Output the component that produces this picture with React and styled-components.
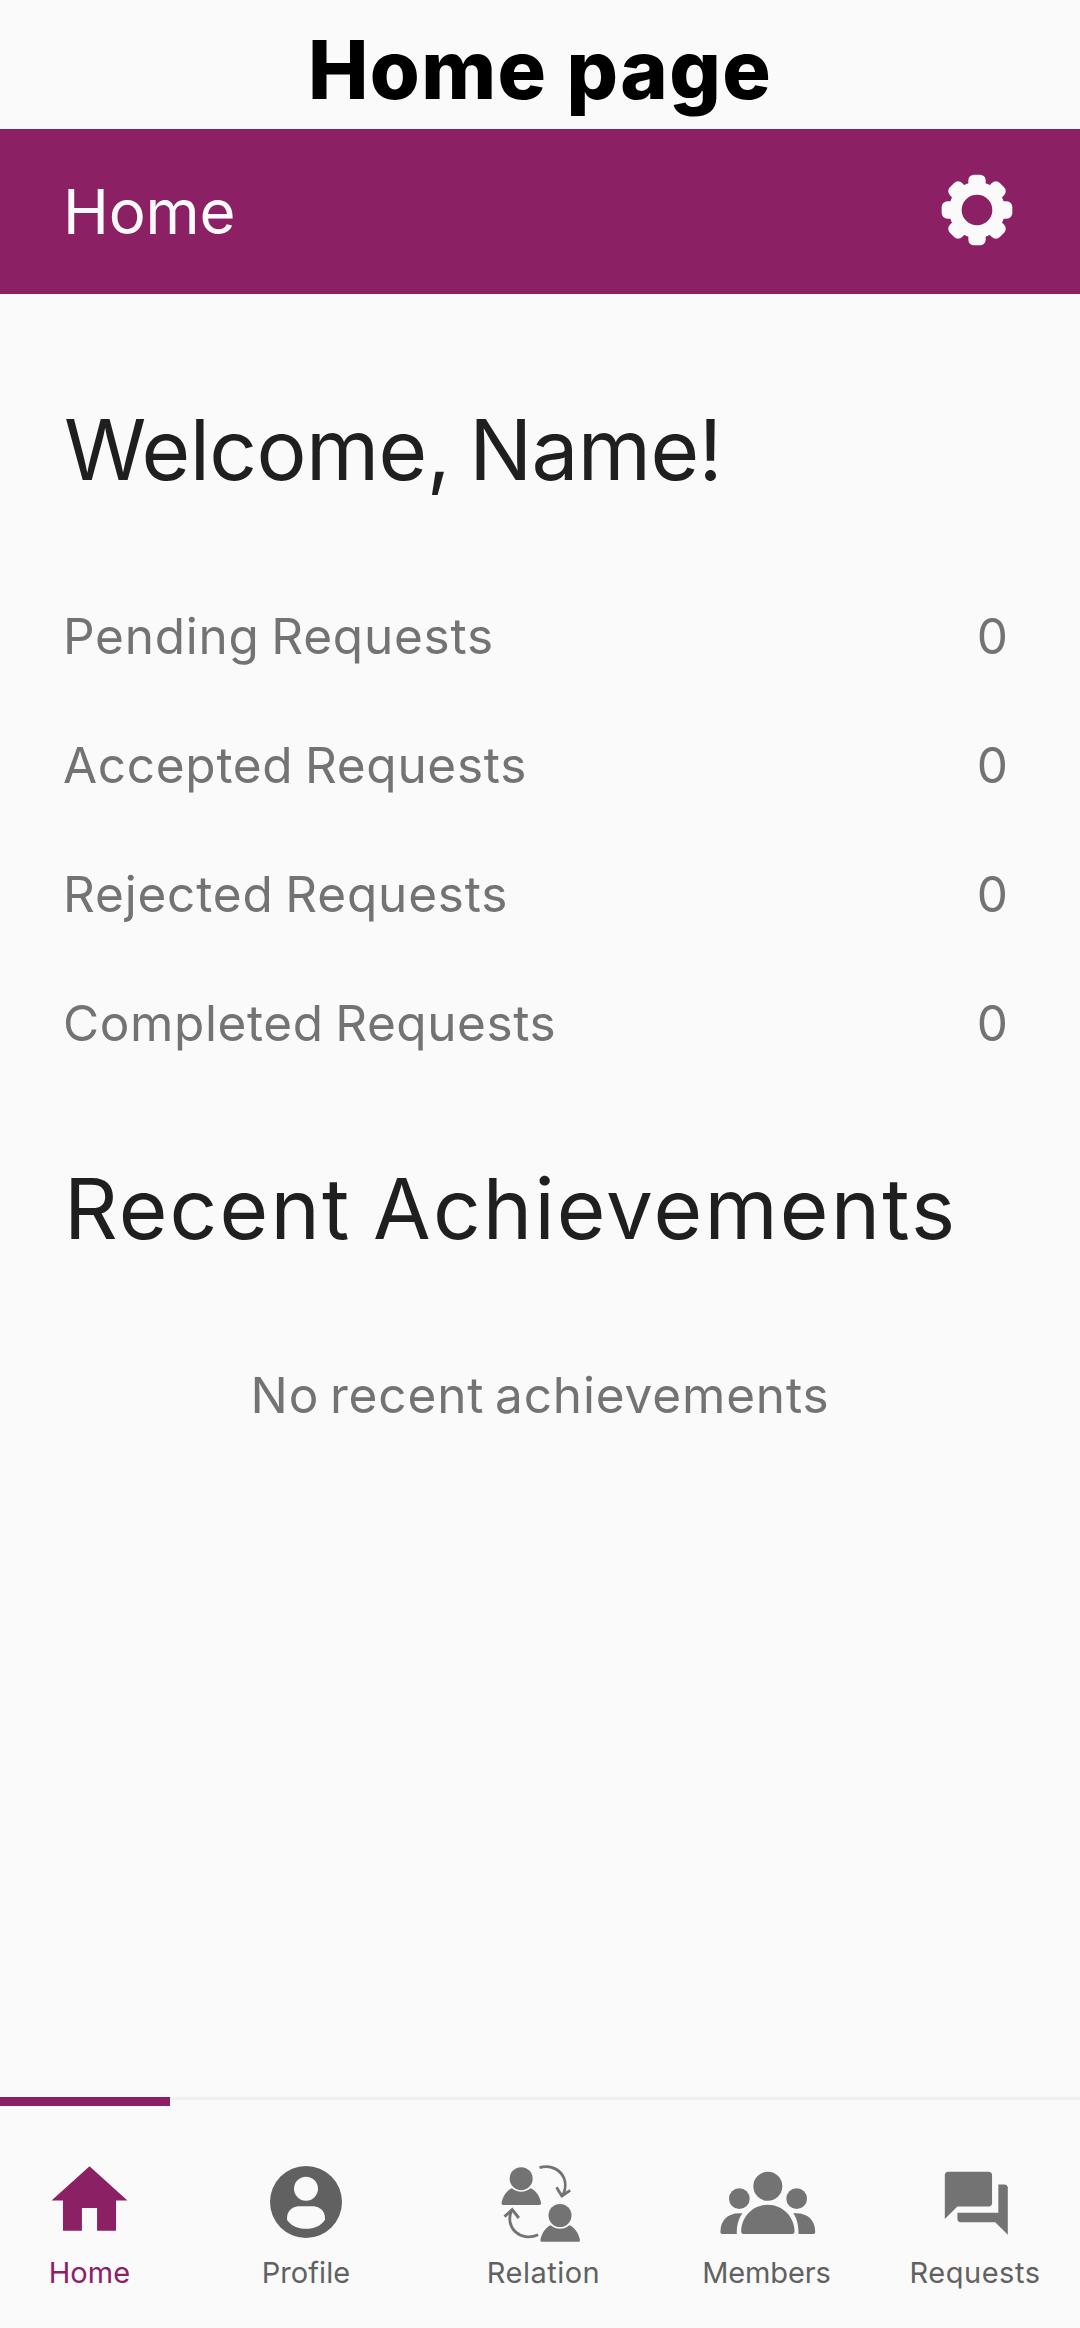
import React from "react";
import styled, { createGlobalStyle } from "styled-components";

const colors = {
  brand: "#8b2164",
  page: "#fafafa",
  ink: "#1f1f1f",
  muted: "#737373",
  nav: "#616161",
  line: "#f0f0f0",
};

const GlobalStyle = createGlobalStyle`
  *, *::before, *::after { box-sizing: border-box; }
  body {
    margin: 0;
    background: ${colors.page};
    font-family: Inter, Roboto, "Liberation Sans", sans-serif;
    font-weight: 430;
  }
`;

const Screen = styled.div`
  display: flex;
  flex-direction: column;
  width: 1080px;
  height: 2328px;
  background: ${colors.page};
  overflow: hidden;
`;

const PageTitle = styled.h1`
  display: flex;
  align-items: center;
  justify-content: center;
  flex: none;
  height: 129px;
  margin: 0;
  padding-top: 10px;
  font-size: 80.8px;
  font-weight: 800;
  line-height: 100px;
  letter-spacing: 1.4px;
  color: #000;
`;

const AppBar = styled.header`
  display: flex;
  align-items: center;
  justify-content: space-between;
  flex: none;
  height: 165px;
  padding: 0 67px 0 63px;
  background: ${colors.brand};
  color: ${colors.page};
`;

const AppBarTitle = styled.div`
  font-size: 61.8px;
  line-height: 80px;
  letter-spacing: -0.2px;
`;

const IconButton = styled.button`
  display: flex;
  padding: 0 0 4px;
  border: 0;
  background: none;
  color: inherit;
`;

const Content = styled.main`
  display: flex;
  flex-direction: column;
  flex: 1;
  padding-top: 106px;
`;

const Heading = styled.h2`
  margin: 0;
  padding-left: 64px;
  font-size: 83.6px;
  font-weight: 430;
  line-height: 100px;
  letter-spacing: ${(p) => p.$track}px;
  word-spacing: -4px;
  white-space: nowrap;
  color: ${colors.ink};
`;

const Stats = styled.dl`
  display: flex;
  flex-direction: column;
  margin: 71px 0 72px;
  padding: 0 72px 0 63px;
`;

const StatRow = styled.div`
  display: flex;
  align-items: center;
  justify-content: space-between;
  height: 129px;
  font-size: 49.5px;
  line-height: 60px;
  color: ${colors.muted};
`;

const StatLabel = styled.dt`
  letter-spacing: ${(p) => p.$track}px;
  word-spacing: -3px;
`;

const StatValue = styled.dd`
  margin: 0;
`;

const EmptyText = styled.p`
  margin: 106px 0 0;
  text-align: center;
  font-size: 49.5px;
  line-height: 60px;
  letter-spacing: 0.85px;
  word-spacing: -4px;
  color: ${colors.muted};
`;

const NavBar = styled.nav`
  position: relative;
  display: grid;
  grid-template-columns: 179px 254px 221px 225px 192px;
  flex: none;
  height: 231px;
  border-top: 3px solid ${colors.line};
`;

const ActiveBar = styled.span`
  position: absolute;
  top: -3px;
  left: 0;
  width: 169.5px;
  height: 9px;
  background: ${colors.brand};
`;

const NavItem = styled.a`
  display: flex;
  flex-direction: column;
  align-items: center;
  padding-top: 52px;
  color: ${(p) => (p.$active ? colors.brand : colors.nav)};
`;

const NavIcon = styled.span`
  display: flex;
  align-items: center;
  justify-content: center;
  height: 100px;
  color: ${(p) => p.$tone};
`;

const NavLabel = styled.span`
  font-size: 29px;
  line-height: 41px;
  letter-spacing: ${(p) => p.$track}px;
`;

const GearIcon = () => (
  <svg width="72" height="72" viewBox="-108 -108 216 216">
    <circle r="65" fill="none" stroke="currentColor" strokeWidth="38" />
    {[0, 45, 90, 135, 180, 225, 270, 315].map((angle) => (
      <rect
        key={angle}
        x="-26"
        y="-106"
        width="52"
        height="50"
        rx="17"
        fill="currentColor"
        transform={`rotate(${angle})`}
      />
    ))}
  </svg>
);

const HomeIcon = () => (
  <svg width="91" height="91" viewBox="0 0.53 24 24" fill="currentColor">
    <path d="M10 20v-6h4v6h5v-8h3L12 3 2 12h3v8z" />
  </svg>
);

const ProfileIcon = () => (
  <svg width="72" height="72" viewBox="0 0 216 216">
    <circle cx="108" cy="108" r="108" fill="currentColor" />
    <circle cx="108" cy="68" r="36" fill={colors.page} />
    <path
      d="M84 120.500H132C152 122 165 138 165 156V161C155 178 132 188.500 108 188.500S61 178 51 161V156C51 138 64 122 84 120.500z"
      fill={colors.page}
    />
  </svg>
);

const RelationIcon = () => (
  <svg width="90" height="90" viewBox="175.5 111 270 270" fill="currentColor">
    {[[0, 0], [116.5, 110.5]].map(([x, y]) => (
      <g key={x} transform={`translate(${x} ${y})`}>
        <circle cx="242" cy="176" r="34.500" />
        <path d="M214 205C230 219 254 219 270 205C288 212 299 232 302 250Q302 255 297 255H188Q183 255 183 250C186 232 197 212 214 205z" />
      </g>
    ))}
    <g fill="none" stroke="currentColor" strokeWidth="8.500">
      <path d="M297 143C348 127 393 173 366 228" />
      <path d="M348 202L364 228L389 211" />
      <path d="M293 344C240 368 190 322 214 270" />
      <path d="M192 290L215 269L235 294" />
    </g>
  </svg>
);

const MembersIcon = () => (
  <svg width="100" height="100" viewBox="109.500 96 300 300" fill="currentColor">
    <circle cx="262" cy="199" r="43.500" />
    <circle cx="176.500" cy="236" r="31" />
    <circle cx="348.500" cy="236" r="31" />
    <path d="M182 334C182 291 217 254 262 254S342 291 342 334Q342 342 335 342H189Q182 342 182 334z" />
    <path d="M186 280C174 296 168 318 169 342H125Q119 342 120 334C120 302 142 276 186 280z" />
    <path d="M338 280C350 296 354 318 354 342H399Q405 342 404 334C404 302 382 276 338 280z" />
  </svg>
);

const RequestsIcon = () => (
  <svg width="75.600" height="75.600" viewBox="-0.48 -0.48 24 24" fill="currentColor">
    <path d="M21 6h-2v9H6v2c0 .55.45 1 1 1h11l4 4V7c0-.55-.45-1-1-1zm-4 6V3c0-.55-.45-1-1-1H3c-.55 0-1 .45-1 1v14l4-4h10c.55 0 1-.45 1-1z" />
  </svg>
);

const stats = [
  { label: "Pending Requests", value: 0, track: 0.76 },
  { label: "Accepted Requests", value: 0, track: 0.7 },
  { label: "Rejected Requests", value: 0, track: 0.82 },
  { label: "Completed Requests", value: 0, track: 0.6 },
];

const tabs = [
  { label: "Home", Icon: HomeIcon, tone: colors.brand, track: 0.1, active: true },
  { label: "Profile", Icon: ProfileIcon, tone: colors.nav, track: 0.05 },
  { label: "Relation", Icon: RelationIcon, tone: colors.muted, track: 0.5 },
  { label: "Members", Icon: MembersIcon, tone: colors.muted, track: -0.15 },
  { label: "Requests", Icon: RequestsIcon, tone: colors.muted, track: 0.55 },
];

export default function App() {
  return (
    <>
      <GlobalStyle />
      <Screen>
        <PageTitle>Home page</PageTitle>
        <AppBar>
          <AppBarTitle>Home</AppBarTitle>
          <IconButton aria-label="Settings">
            <GearIcon />
          </IconButton>
        </AppBar>
        <Content>
          <Heading $track={-0.6}>Welcome, Name!</Heading>
          <Stats>
            {stats.map((s) => (
              <StatRow key={s.label}>
                <StatLabel $track={s.track}>{s.label}</StatLabel>
                <StatValue>{s.value}</StatValue>
              </StatRow>
            ))}
          </Stats>
          <Heading $track={2.15}>Recent Achievements</Heading>
          <EmptyText>No recent achievements</EmptyText>
        </Content>
        <NavBar>
          <ActiveBar />
          {tabs.map(({ label, Icon, tone, track, active }) => (
            <NavItem key={label} $active={active}>
              <NavIcon $tone={tone}>
                <Icon />
              </NavIcon>
              <NavLabel $track={track}>{label}</NavLabel>
            </NavItem>
          ))}
        </NavBar>
      </Screen>
    </>
  );
}
